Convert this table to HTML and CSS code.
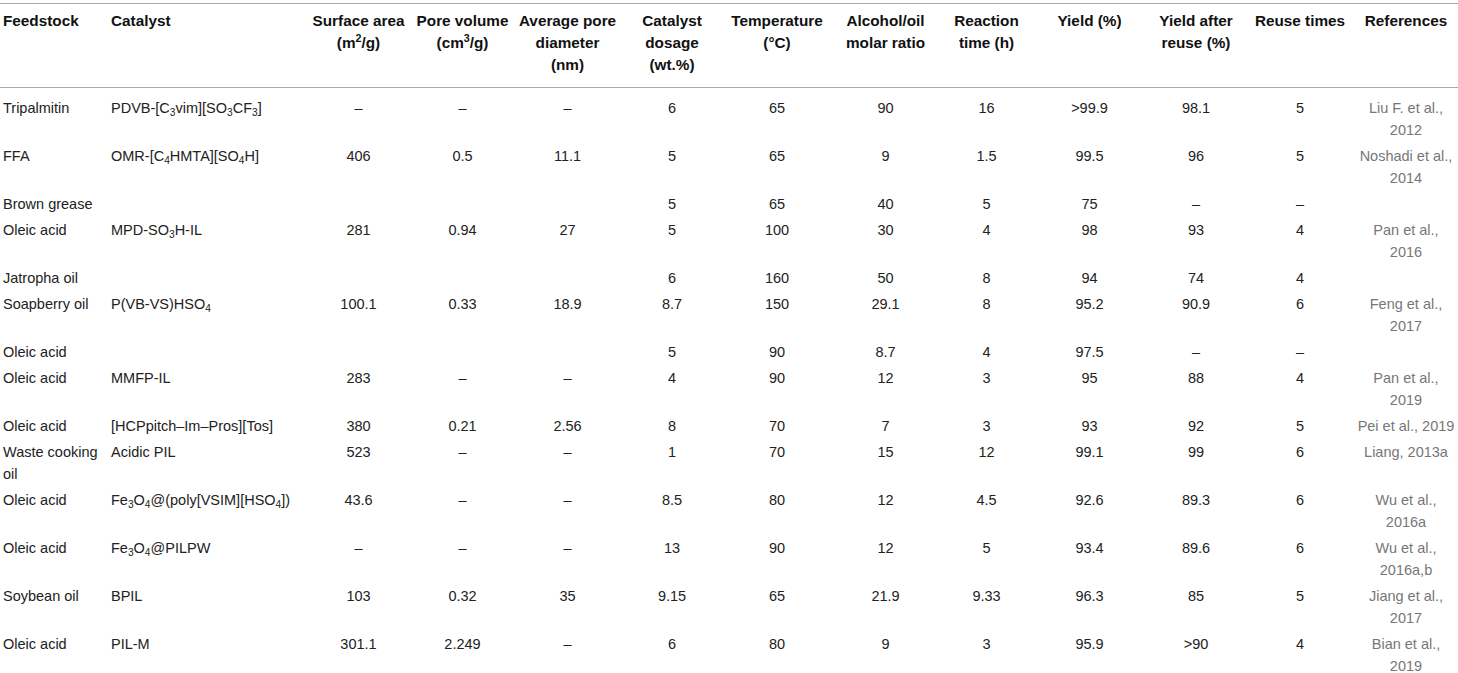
FILE: index.html
```html
<!DOCTYPE html>
<html lang="en">
<head>
  <meta charset="UTF-8">
  <meta name="viewport" content="width=device-width, initial-scale=1.0">
  <title>Polymeric ionic liquid catalysts</title>
  <link rel="stylesheet" href="styles.css">
</head>
<body>

  <table class="data-table">
    <colgroup>
      <col class="c-feed">
      <col class="c-cat">
      <col class="c-surf">
      <col class="c-pore">
      <col class="c-diam">
      <col class="c-dose">
      <col class="c-temp">
      <col class="c-ratio">
      <col class="c-time">
      <col class="c-yield">
      <col class="c-after">
      <col class="c-reuse">
      <col class="c-ref">
    </colgroup>
    <thead>
      <tr>
        <th class="left">Feedstock</th>
        <th class="left">Catalyst</th>
        <th>Surface area<br>(m<sup>2</sup>/g)</th>
        <th>Pore volume<br>(cm<sup>3</sup>/g)</th>
        <th>Average pore<br>diameter<br>(nm)</th>
        <th>Catalyst<br>dosage<br>(wt.%)</th>
        <th>Temperature<br>(°C)</th>
        <th>Alcohol/oil<br>molar ratio</th>
        <th>Reaction<br>time (h)</th>
        <th>Yield (%)</th>
        <th>Yield after<br>reuse (%)</th>
        <th>Reuse times</th>
        <th>References</th>
      </tr>
    </thead>
    <tbody>
      <tr>
        <td class="left">Tripalmitin</td>
        <td class="left">PDVB-[C<sub>3</sub>vim][SO<sub>3</sub>CF<sub>3</sub>]</td>
        <td>–</td><td>–</td><td>–</td>
        <td>6</td><td>65</td><td>90</td><td>16</td>
        <td>&gt;99.9</td><td>98.1</td><td>5</td>
        <td class="ref">Liu F. et al.,<br>2012</td>
      </tr>
      <tr>
        <td class="left">FFA</td>
        <td class="left">OMR-[C<sub>4</sub>HMTA][SO<sub>4</sub>H]</td>
        <td>406</td><td>0.5</td><td>11.1</td>
        <td>5</td><td>65</td><td>9</td><td>1.5</td>
        <td>99.5</td><td>96</td><td>5</td>
        <td class="ref">Noshadi et al.,<br>2014</td>
      </tr>
      <tr>
        <td class="left">Brown grease</td>
        <td class="left"></td>
        <td></td><td></td><td></td>
        <td>5</td><td>65</td><td>40</td><td>5</td>
        <td>75</td><td>–</td><td>–</td>
        <td class="ref"></td>
      </tr>
      <tr>
        <td class="left">Oleic acid</td>
        <td class="left">MPD-SO<sub>3</sub>H-IL</td>
        <td>281</td><td>0.94</td><td>27</td>
        <td>5</td><td>100</td><td>30</td><td>4</td>
        <td>98</td><td>93</td><td>4</td>
        <td class="ref">Pan et al.,<br>2016</td>
      </tr>
      <tr>
        <td class="left">Jatropha oil</td>
        <td class="left"></td>
        <td></td><td></td><td></td>
        <td>6</td><td>160</td><td>50</td><td>8</td>
        <td>94</td><td>74</td><td>4</td>
        <td class="ref"></td>
      </tr>
      <tr>
        <td class="left">Soapberry oil</td>
        <td class="left">P(VB-VS)HSO<sub>4</sub></td>
        <td>100.1</td><td>0.33</td><td>18.9</td>
        <td>8.7</td><td>150</td><td>29.1</td><td>8</td>
        <td>95.2</td><td>90.9</td><td>6</td>
        <td class="ref">Feng et al.,<br>2017</td>
      </tr>
      <tr>
        <td class="left">Oleic acid</td>
        <td class="left"></td>
        <td></td><td></td><td></td>
        <td>5</td><td>90</td><td>8.7</td><td>4</td>
        <td>97.5</td><td>–</td><td>–</td>
        <td class="ref"></td>
      </tr>
      <tr>
        <td class="left">Oleic acid</td>
        <td class="left">MMFP-IL</td>
        <td>283</td><td>–</td><td>–</td>
        <td>4</td><td>90</td><td>12</td><td>3</td>
        <td>95</td><td>88</td><td>4</td>
        <td class="ref">Pan et al.,<br>2019</td>
      </tr>
      <tr>
        <td class="left">Oleic acid</td>
        <td class="left">[HCPpitch–Im–Pros][Tos]</td>
        <td>380</td><td>0.21</td><td>2.56</td>
        <td>8</td><td>70</td><td>7</td><td>3</td>
        <td>93</td><td>92</td><td>5</td>
        <td class="ref">Pei et al., 2019</td>
      </tr>
      <tr>
        <td class="left">Waste cooking<br>oil</td>
        <td class="left">Acidic PIL</td>
        <td>523</td><td>–</td><td>–</td>
        <td>1</td><td>70</td><td>15</td><td>12</td>
        <td>99.1</td><td>99</td><td>6</td>
        <td class="ref">Liang, 2013a</td>
      </tr>
      <tr>
        <td class="left">Oleic acid</td>
        <td class="left">Fe<sub>3</sub>O<sub>4</sub>@(poly[VSIM][HSO<sub>4</sub>])</td>
        <td>43.6</td><td>–</td><td>–</td>
        <td>8.5</td><td>80</td><td>12</td><td>4.5</td>
        <td>92.6</td><td>89.3</td><td>6</td>
        <td class="ref">Wu et al.,<br>2016a</td>
      </tr>
      <tr>
        <td class="left">Oleic acid</td>
        <td class="left">Fe<sub>3</sub>O<sub>4</sub>@PILPW</td>
        <td>–</td><td>–</td><td>–</td>
        <td>13</td><td>90</td><td>12</td><td>5</td>
        <td>93.4</td><td>89.6</td><td>6</td>
        <td class="ref">Wu et al.,<br>2016a,b</td>
      </tr>
      <tr>
        <td class="left">Soybean oil</td>
        <td class="left">BPIL</td>
        <td>103</td><td>0.32</td><td>35</td>
        <td>9.15</td><td>65</td><td>21.9</td><td>9.33</td>
        <td>96.3</td><td>85</td><td>5</td>
        <td class="ref">Jiang et al.,<br>2017</td>
      </tr>
      <tr>
        <td class="left">Oleic acid</td>
        <td class="left">PIL-M</td>
        <td>301.1</td><td>2.249</td><td>–</td>
        <td>6</td><td>80</td><td>9</td><td>3</td>
        <td>95.9</td><td>&gt;90</td><td>4</td>
        <td class="ref">Bian et al.,<br>2019</td>
      </tr>
    </tbody>
  </table>

</body>
</html>
```

FILE: styles.css
```css
body {
  margin: 0;
  padding-top: 3px;
  background-color: #fff;
  font-family: "Liberation Sans", Arial, sans-serif;
  color: #222;
}
.data-table {
  width: 1458px;
  table-layout: fixed;
  border-collapse: collapse;
  border-top: 1px solid #aaa;
}
.c-feed { width: 108px; }
.c-cat { width: 198px; }
.c-surf { width: 105px; }
.c-pore { width: 103px; }
.c-diam { width: 107px; }
.c-dose { width: 102px; }
.c-temp { width: 108px; }
.c-ratio { width: 109px; }
.c-time { width: 93px; }
.c-yield { width: 113px; }
.c-after { width: 100px; }
.c-reuse { width: 108px; }
.c-ref { width: 104px; }

th,
td {
  vertical-align: top;
  text-align: center;
  padding: 2px 3px;
  line-height: 22px;
}
th {
  font-size: 15.3px;
  font-weight: bold;
  color: #111;
  padding-top: 6px;
  padding-bottom: 11px;
  border-bottom: 1px solid #aaa;
}
td {
  font-size: 14.5px;
}
.left {
  text-align: left;
}
tbody tr:first-child td {
  padding-top: 9px;
}
.ref {
  color: #777;
  white-space: nowrap;
  padding: 2px 1px;
}
tbody tr:first-child td.ref {
  padding-top: 9px;
}
sub,
sup {
  font-size: 0.7em;
  line-height: 0;
}
sub {
  vertical-align: -0.3em;
}
sup {
  vertical-align: 0.55em;
}
```
